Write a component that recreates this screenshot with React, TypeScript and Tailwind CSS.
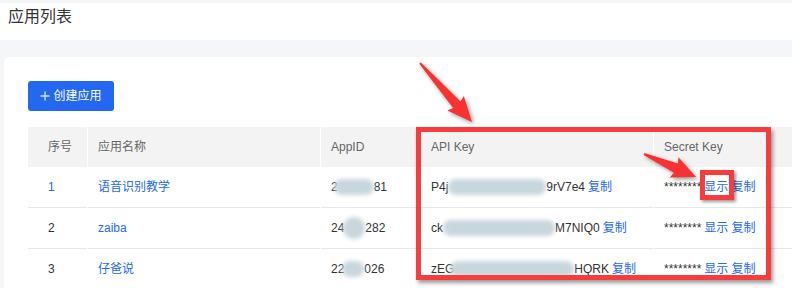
import React from 'react';

interface AppRow {
  no: string;
  noLink?: boolean;
  name: string;
  appId: [string, number, number, string, number?];
  apiKey: [string, number, number, string];
}

const rows: AppRow[] = [
  { no: '1', noLink: true, name: '语音识别教学', appId: ['2', 40, -4, '81'], apiKey: ['P4j', 98, 0, '9rV7e4'] },
  { no: '2', name: 'zaiba', appId: ['24', 22, -1, '282', 22], apiKey: ['ck', 112, 0, 'M7NIQ0'] },
  { no: '3', name: '仔爸说', appId: ['22', 22, -2, '026'], apiKey: ['zEG', 124, -4, 'HQRK'] },
];

// blurred-out part of a key
const Smudge: React.FC<{ w: number; ml: number; h?: number }> = ({ w, ml, h = 16 }) => (
  <span
    className="inline-block rounded-full bg-[#c8d7dd] blur-[2px] align-middle"
    style={{ width: w, height: h, marginLeft: ml }}
  />
);

const Plus = () => (
  <svg width="10" height="10" viewBox="0 0 10 10" className="opacity-80">
    <path d="M5 0.5v9M0.5 5h9" stroke="white" strokeWidth="1.4" />
  </svg>
);

const Arrows = () => (
  <svg
    className="absolute inset-0 pointer-events-none drop-shadow-[2px_2px_2px_rgba(0,0,0,0.4)]"
    width="792"
    height="288"
  >
    <polygon
      points="419.3,63.7 420.7,62.3 460.6,101.4 463.8,96 472,122 447.3,110.5 453.1,108"
      fill="#f83232"
    />
    <polygon
      points="643.6,154.9 644.4,153.1 677.9,163.5 678.5,157.2 696,177 669.7,177.4 673.9,172.7"
      fill="#f83232"
    />
  </svg>
);

export default function App() {
  return (
    <div className="relative w-[792px] h-[288px] overflow-hidden bg-[#f5f6f8] pt-[3px] font-['Liberation_Sans','Noto_Sans_CJK_SC',sans-serif]">
      <div className="h-[37px] bg-white px-2 pt-[2px]">
        <h1 className="text-base leading-6 text-[#333]">应用列表</h1>
      </div>

      <div className="mt-[17px] ml-1 w-[1000px] h-[400px] rounded-tl-[6px] bg-white pt-6 pl-6">
        <button className="h-[30px] w-[86px] rounded-[3px] bg-[#2468f2] flex items-center justify-center gap-[3px] text-white text-xs">
          <Plus />
          <span>创建应用</span>
        </button>

        <div className="mt-4 text-xs">
          <div className="flex gap-px h-10 text-[#666]">
            <div className="w-[59px] bg-[#f3f3f3] flex items-center pl-5">序号</div>
            <div className="w-[232px] bg-[#f3f3f3] flex items-center pl-[10px]">应用名称</div>
            <div className="w-[99px] bg-[#f3f3f3] flex items-center pl-[10px]">AppID</div>
            <div className="w-[232px] bg-[#f3f3f3] flex items-center pl-[10px]">API Key</div>
            <div className="w-[340px] bg-[#f3f3f3] flex items-center pl-[10px]">Secret Key</div>
          </div>

          {rows.map((r) => (
            <div key={r.no} className="flex gap-px h-[41px] text-[#333]">
              <div className="w-[59px] border-b border-[#e8e8e8] flex items-center pl-5">
                <span className={r.noLink ? 'text-[#2468f2]' : ''}>{r.no}</span>
              </div>
              <div className="w-[232px] border-b border-[#e8e8e8] flex items-center pl-[10px] text-[#2468f2]">{r.name}</div>
              <div className="w-[99px] border-b border-[#e8e8e8] flex items-center pl-[10px] whitespace-nowrap">
                <span>{r.appId[0]}</span>
                <Smudge w={r.appId[1]} ml={r.appId[2]} h={r.appId[4]} />
                <span>{r.appId[3]}</span>
              </div>
              <div className="w-[232px] border-b border-[#e8e8e8] flex items-center pl-[10px] whitespace-nowrap">
                <span>{r.apiKey[0]}</span>
                <Smudge w={r.apiKey[1]} ml={r.apiKey[2]} />
                <span>{r.apiKey[3]}</span>
                <span className="ml-[3px] text-[#2468f2]">复制</span>
              </div>
              <div className="w-[340px] border-b border-[#e8e8e8] flex items-center pl-[10px] whitespace-nowrap">
                <span>********</span>
                <span className="ml-[3px] text-[#2468f2]">显示</span>
                <span className="ml-[3px] text-[#2468f2]">复制</span>
              </div>
            </div>
          ))}
        </div>
      </div>

      {/* annotations */}
      <div className="absolute left-[416px] top-[127px] w-[355px] h-[153px] border-[5px] border-[#f83c3c] shadow-[2px_3px_4px_rgba(0,0,0,0.4)] pointer-events-none" />
      <div className="absolute left-[700px] top-[170px] w-[34px] h-[30px] border-[5px] border-[#f83c3c] shadow-[2px_2px_3px_rgba(0,0,0,0.4)] pointer-events-none" />
      <Arrows />
    </div>
  );
}
